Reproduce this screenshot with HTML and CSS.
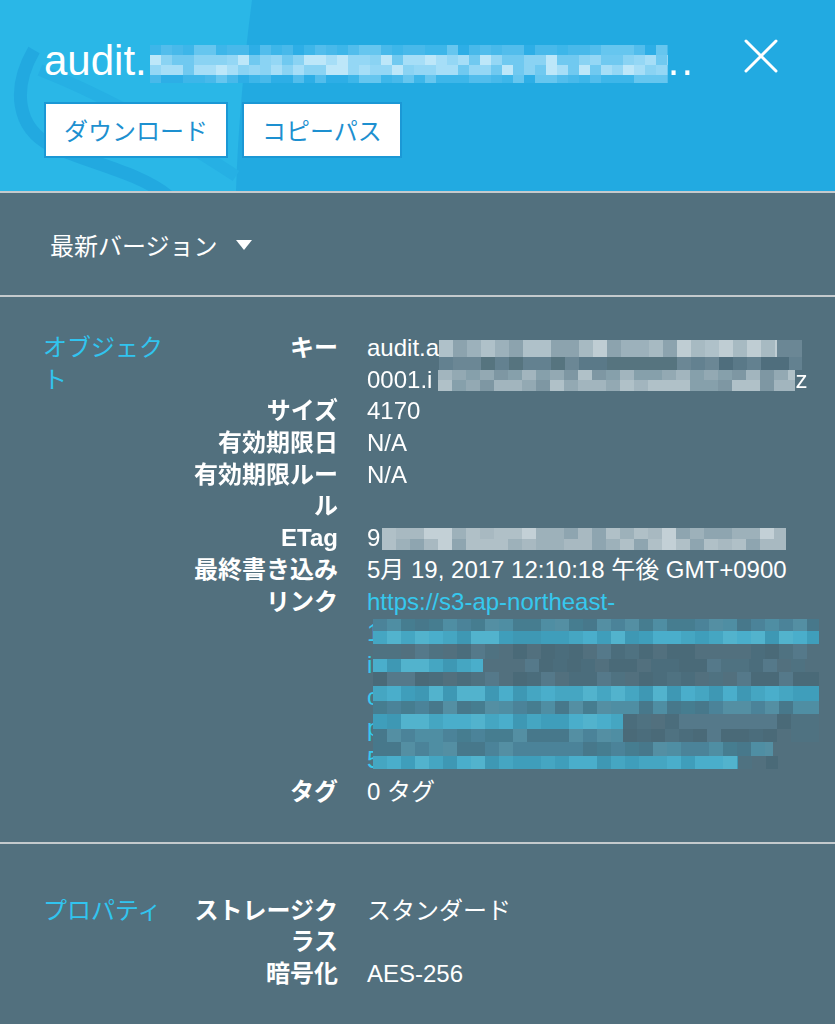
FILE: index.html
```html
<!DOCTYPE html>
<html lang="ja">
<head>
<meta charset="utf-8">
<title>audit</title>
<link rel="stylesheet" href="styles.css">
</head>
<body>
<div class="drawer">
  <header class="head">
    <svg class="head-bg" viewBox="0 0 835 191" preserveAspectRatio="none" aria-hidden="true">
      <rect width="835" height="191" fill="#22aae1"/>
      <path d="M0 0 H252 C244 60 238 130 236 191 H0 Z" fill="#2ab7e7"/>
      <path d="M34 50 C12 88 16 128 52 146 C92 164 138 172 168 196" stroke="#22a9e0" stroke-width="13" fill="none"/>
      <path d="M40 70 C95 92 150 120 236 176" stroke="#26b0e4" stroke-width="12" fill="none"/>
    </svg>
    <div class="head-top">
      <h1 class="title"><span>audit.</span><canvas class="mosaic m-title" data-mosaic="title"></canvas><span class="dots">..</span></h1>
      <button class="close" type="button" aria-label="閉じる">
        <svg viewBox="0 0 34 34" width="34" height="34"><path d="M2 2 L32 32 M32 2 L2 32" stroke="#fff" stroke-width="3" stroke-linecap="round" fill="none"/></svg>
      </button>
    </div>
    <div class="actions">
      <button class="btn" type="button">ダウンロード</button>
      <button class="btn" type="button">コピーパス</button>
    </div>
  </header>

  <div class="version">最新バージョン<span class="caret"></span></div>

  <section class="sec sec-object">
    <h2 class="sec-title">オブジェクト</h2>
    <dl class="props">
      <dt>キー</dt>
      <dd>
        <div class="vline">audit.a<canvas class="mosaic m-key1" data-mosaic="key1"></canvas></div>
        <div class="vline">0001.i<canvas class="mosaic m-key2" data-mosaic="key2"></canvas>z</div>
      </dd>
      <dt>サイズ</dt><dd>4170</dd>
      <dt>有効期限日</dt><dd>N/A</dd>
      <dt>有効期限ルール</dt><dd>N/A</dd>
      <dt>ETag</dt>
      <dd><div class="vline">9<canvas class="mosaic m-etag" data-mosaic="etag"></canvas></div></dd>
      <dt>最終書き込み</dt><dd>5月 19, 2017 12:10:18 午後 GMT+0900</dd>
      <dt>リンク</dt>
      <dd class="link">
        <div>https://s3-ap-northeast-</div>
        <div class="link-rest">
          <div>1</div><div>i</div><div>c</div><div>p</div><div>5</div>
          <canvas class="mosaic m-link" data-mosaic="link"></canvas>
        </div>
      </dd>
      <dt>タグ</dt><dd>0 タグ</dd>
    </dl>
  </section>

  <section class="sec sec-props">
    <h2 class="sec-title">プロパティ</h2>
    <dl class="props">
      <dt>ストレージクラス</dt><dd>スタンダード</dd>
      <dt>暗号化</dt><dd>AES-256</dd>
    </dl>
  </section>
</div>
<script src="script.js"></script>
</body>
</html>
```

FILE: styles.css
```css
html, body {
  margin: 0;
  padding: 0;
}
body {
  background: #52707e;
  font-family: "Liberation Sans", "Noto Sans CJK JP", sans-serif;
  color: #fff;
}
.drawer {
  width: 835px;
  min-height: 1024px;
  background: #52707e;
}

/* header */
.head {
  position: relative;
  overflow: hidden;
  padding: 37px 0 33px 44px;
  border-bottom: 2px solid #c4cacd;
}
.head-bg {
  position: absolute;
  left: 0;
  top: 0;
  width: 100%;
  height: 100%;
  z-index: 0;
}
.head-top,
.actions {
  position: relative;
  z-index: 1;
}
.head-top {
  display: flex;
  justify-content: space-between;
  align-items: flex-start;
}
.title {
  display: flex;
  align-items: flex-start;
  margin: 0;
  font-size: 42px;
  line-height: 48px;
  font-weight: 400;
  color: #fff;
}
.m-title {
  width: 518px;
  height: 38px;
  margin-top: 8px;
  margin-left: 3px;
}
.dots {
  letter-spacing: 2px;
}
.close {
  margin: 2px 57px 0 0;
  padding: 0;
  width: 34px;
  height: 34px;
  border: 0;
  background: transparent;
  display: block;
}
.close svg {
  display: block;
}
.actions {
  display: flex;
  gap: 14px;
  margin-top: 17px;
}
.btn {
  background: #fff;
  border: 2px solid #1b98d5;
  color: #1d90d0;
  font-family: "Noto Sans CJK JP", sans-serif;
  font-size: 24px;
  line-height: 32px;
  padding: 10px 18px;
  margin: 0;
  border-radius: 0;
}

/* version selector */
.version {
  height: 102px;
  display: flex;
  align-items: center;
  padding-left: 50px;
  font-family: "Noto Sans CJK JP", sans-serif;
  font-size: 24px;
  color: #fff;
  border-bottom: 2px solid #c4cacd;
}
.caret {
  width: 0;
  height: 0;
  margin-left: 18px;
  margin-top: 2px;
  border-left: 8px solid transparent;
  border-right: 8px solid transparent;
  border-top: 10px solid #fff;
}

/* sections */
.sec {
  display: flex;
  align-items: flex-start;
  padding: 35px 0 34px 43px;
  font-size: 24px;
  line-height: 31.7px;
}
.sec-object {
  border-bottom: 2px solid #c4cacd;
}
.sec-props {
  padding-top: 51px;
}
.sec-title {
  width: 130px;
  margin: 0 15px 0 0;
  font-size: 24px;
  font-weight: 400;
  line-height: 31.7px;
  color: #31c4ef;
}
.props {
  flex: 1;
  margin: 0;
  display: grid;
  grid-template-columns: 150px 1fr;
  column-gap: 29px;
}
.props dt {
  margin: 0;
  font-weight: 700;
  text-align: right;
}
.props dd {
  margin: 0;
  min-width: 0;
}
.vline {
  display: flex;
  align-items: flex-start;
  height: 31.7px;
  white-space: nowrap;
}
.mosaic {
  display: block;
  flex: none;
}
.m-key1 {
  width: 363px;
  height: 30px;
  margin-top: 8px;
}
.m-key2 {
  width: 357px;
  height: 21px;
  margin-top: 6px;
  margin-left: 6px;
}
.m-etag {
  width: 404px;
  height: 22px;
  margin-top: 6px;
  margin-left: 2px;
}
.link {
  color: #36c8ee;
}
.link-rest {
  position: relative;
}
.m-link {
  position: absolute;
  left: 6px;
  top: 2px;
  width: 446px;
  height: 150px;
}
```

FILE: script.js
```js
(function () {
  var P = {
    TM: ['#3db6e9', '#52bdec', '#2daee6', '#66c6ef', '#48b9ea'],
    TL: ['#8ad3f3', '#a6def7', '#70c9f0', '#bde7f9', '#94d7f5'],
    KL: ['#afc1c9', '#9cb1bb', '#bfcdd3', '#8ca3ae', '#a7bac2'],
    KD: ['#5a7988', '#4f6e7d', '#638190', '#56747f', '#6b8795'],
    K2: ['#a2b5be', '#93a9b3', '#86a0ab', '#b0c1c8', '#7e97a3'],
    E: ['#b0c0c7', '#c3d0d6', '#9db1ba', '#a8b9c1', '#8ea5b0'],
    LC: ['#45a6c2', '#4aaecb', '#3f9ebb', '#52b3cd', '#3e98b4'],
    LM: ['#4b8399', '#4f8ea3', '#47788b', '#548fa3', '#467d90'],
    LD: ['#4f7281', '#4b6d7c', '#55798a', '#4a6a78', '#52707e']
  };
  var SPECS = {
    title: { cell: 11, rows: [
      [10, [[0, 'TM']]], [10, [[0, 'TL']]], [10, [[0, 'TL']]], [8, [[0, 'TM']]]
    ] },
    key1: { cell: 14, rows: [
      [17, [[338, 'KL'], [0, 'KD']]], [13, [[0, 'KD']]]
    ] },
    key2: { cell: 14, rows: [
      [10, [[0, 'K2']]], [11, [[0, 'K2']]]
    ] },
    etag: { cell: 14, rows: [
      [11, [[0, 'E']]], [11, [[0, 'E']]]
    ] },
    link: { cell: 14, rows: [
      [12, [[0, 'LM']]],
      [13, [[0, 'LC']]],
      [15, [[0, 'LD']]],
      [13, [[110, 'LC'], [0, 'LD']]],
      [14, [[0, 'LD']]],
      [15, [[0, 'LC']]],
      [13, [[0, 'LM']]],
      [15, [[250, 'LC'], [0, 'LD']]],
      [13, [[250, 'LM'], [0, 'LD']]],
      [14, [[400, 'LM']]],
      [13, [[365, 'LC'], [40, 'LD']]]
    ] }
  };
  function rand(seed) {
    var s = seed % 2147483647;
    if (s <= 0) s += 2147483646;
    return function () {
      s = (s * 16807) % 2147483647;
      return (s - 1) / 2147483646;
    };
  }
  var list = document.querySelectorAll('canvas[data-mosaic]');
  for (var i = 0; i < list.length; i++) {
    var c = list[i];
    var spec = SPECS[c.getAttribute('data-mosaic')];
    var w = c.clientWidth, h = c.clientHeight;
    c.width = w;
    c.height = h;
    var ctx = c.getContext('2d');
    var r = rand(i * 977 + 131);
    var y = 0;
    for (var j = 0; j < spec.rows.length; j++) {
      var row = spec.rows[j], rh = row[0], x = 0;
      for (var k = 0; k < row[1].length; k++) {
        var seg = row[1][k];
        var sw = seg[0] || (w - x), pal = P[seg[1]];
        for (var cx = 0; cx < sw; cx += spec.cell) {
          ctx.fillStyle = pal[Math.floor(r() * pal.length)];
          ctx.fillRect(x + cx, y, Math.min(spec.cell, sw - cx), rh);
        }
        x += sw;
      }
      y += rh;
    }
  }
})();
```
